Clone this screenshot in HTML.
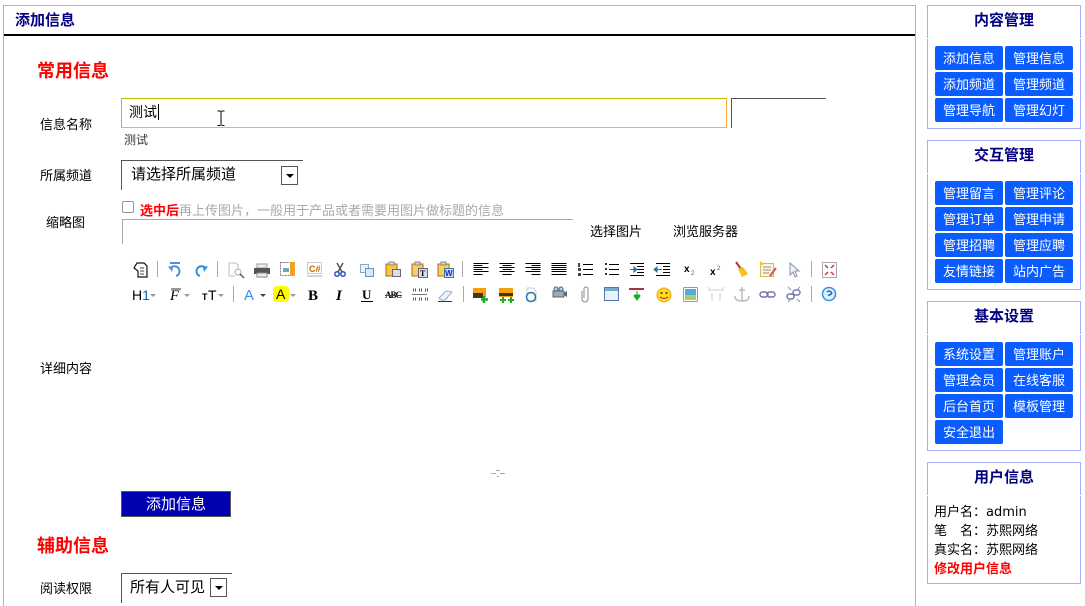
<!DOCTYPE html>
<html lang="zh"><head><meta charset="utf-8"><title>添加信息</title>
<style>
html,body{margin:0;padding:0;background:#fff;overflow:hidden;width:1085px;height:606px}
body{position:relative;font:13px/18px "Liberation Sans","WenQuanYi Zen Hei","Noto Sans CJK SC",sans-serif;color:#000}
.a{position:absolute;white-space:nowrap}
.box{position:absolute;box-sizing:border-box;border:1px solid #aaaaff;left:927px;width:154px;background:#fff}
.notch{position:absolute;width:1px;height:1px;background:#fff}
.h{position:absolute;left:927px;width:154px;text-align:center;font-size:15px;font-weight:bold;color:#000080;line-height:18px}
.b{position:absolute;width:68px;height:24px;line-height:26px;background:#0b5cff;color:#fff;text-align:center;border-radius:2px;font-size:13px}
.l{position:absolute;left:40px;line-height:18px}
.red{position:absolute;left:37px;font-size:18px;font-weight:bold;color:#f00;line-height:22px}
.ar{position:absolute;box-sizing:border-box;border:1px solid #555;width:17px;height:19px;background:#fff}
.ar:after{content:"";position:absolute;left:4px;top:7px;border:4px solid transparent;border-top:4px solid #000;border-bottom:0}
</style></head><body>
<div class="a" style="left:3px;top:5px;width:913px;height:601px;box-sizing:border-box;border:1px solid #aaaaff;border-bottom:0"></div>
<div class="a" style="left:15px;top:12px;font-size:15px;font-weight:bold;color:#000080">添加信息</div>
<div class="a" style="left:4px;top:34px;width:911px;height:2px;background:#000"></div>

<div class="red" style="top:60px">常用信息</div>
<div class="l" style="top:116px">信息名称</div>
<div class="a" style="left:121px;top:98px;width:606px;height:30px;box-sizing:border-box;border:1px solid;border-color:#c4bc00 #ffaa44 #ffaa66 #c4bc00"></div>
<div class="a" style="left:129px;top:103px;font-size:14px">测试</div>
<div class="a" style="left:158px;top:104px;width:1px;height:16px;background:#000"></div>
<svg class="a" style="left:216px;top:110px" width="10" height="17"><path d="M1.5 1H4.5M5.5 1H8.5M5 1V15M1.5 15.500H4.500M5.500 15.500H8.500" stroke="#000" fill="none"/></svg>
<div class="a" style="left:731px;top:98px;width:95px;height:30px;box-sizing:border-box;border-top:1px solid #555;border-left:1px solid #555"></div>
<div class="a" style="left:124px;top:132px;font-size:12px;line-height:16px;color:#333">测试</div>

<div class="l" style="top:167px">所属频道</div>
<div class="a" style="left:121px;top:160px;width:182px;height:30px;box-sizing:border-box;border-top:1px solid #555;border-left:1px solid #555"></div>
<div class="a" style="left:131px;top:166px;font-size:15px">请选择所属频道</div>
<div class="ar" style="left:281px;top:166px"></div>

<div class="a" style="left:122px;top:201px;width:12px;height:12px;box-sizing:border-box;border:1px solid #999;border-radius:2px"></div>
<div class="a" style="left:140px;top:202px"><b style="color:#f00">选中后</b><span style="color:#aaa">再上传图片，一般用于产品或者需要用图片做标题的信息</span></div>
<div class="a" style="left:46px;top:214px">缩略图</div>
<div class="a" style="left:122px;top:219px;width:451px;height:25px;box-sizing:border-box;border-top:1px solid #aaa;border-left:1px solid #aaa"></div>
<div class="a" style="left:590px;top:223px">选择图片</div>
<div class="a" style="left:673px;top:223px">浏览服务器</div>

<svg class="a" style="left:0;top:0" width="1085" height="606" font-family="Liberation Sans">
<g fill="#aaa"><rect x="157" y="261" width="1" height="16"/><rect x="217" y="261" width="1" height="16"/><rect x="462" y="261" width="1" height="16"/><rect x="811" y="261" width="1" height="16"/><rect x="233" y="286" width="1" height="16"/><rect x="463" y="286" width="1" height="16"/><rect x="811" y="286" width="1" height="16"/></g>
<!-- row 1 -->
<path d="M137 263h7l3 3v11h-9v-6l-4-3z" fill="#fff" stroke="#111" stroke-width="1.200"/><path d="M140 268h4M140 271h4M140 274h4" stroke="#444"/>
<path d="M170 263h10M170 269a5 5 0 1 1 6 7" fill="none" stroke="#4a8fe0" stroke-width="2"/><path d="M168 266l5 1-1 5z" fill="#4a8fe0"/>
<path d="M206 269a5 5 0 1 0-6 7" fill="none" stroke="#2a8fe0" stroke-width="2"/><path d="M208 266l-5 1 1 5z" fill="#2a8fe0"/>
<path d="M229 263h7l2 2v7M229 263v13h6" fill="none" stroke="#bbb"/><circle cx="238" cy="272" r="3" fill="#fff" stroke="#aaa"/><path d="M240 274l4 4" stroke="#555" stroke-width="1.500"/>
<path d="M257 264h10v4h-10z" fill="#eee" stroke="#999"/><rect x="254" y="268" width="16" height="6" fill="#555"/><rect x="257" y="273" width="10" height="4" fill="#eee" stroke="#888"/>
<rect x="280.500" y="262.500" width="13" height="13" fill="#fff" stroke="#777" stroke-dasharray="2 1"/><rect x="290" y="262" width="5" height="14" fill="#f5a020"/><rect x="283" y="268" width="6" height="4" fill="#6ab"/>
<rect x="307.500" y="262.500" width="14" height="11" fill="#fff" stroke="#ccc"/><path d="M307 276h15" stroke="#aaa"/><text x="309" y="272" font-size="9" font-weight="bold" fill="#c60">C#</text>
<path d="M337 263l5 9M343 263l-5 9" stroke="#555" stroke-width="1.500"/><circle cx="337" cy="274" r="2.200" fill="none" stroke="#2a50c0" stroke-width="1.500"/><circle cx="343" cy="274" r="2.200" fill="none" stroke="#2a50c0" stroke-width="1.500"/>
<rect x="360.500" y="264.500" width="8" height="8" fill="#e8f2ff" stroke="#8ab"/><rect x="365.500" y="268.500" width="8" height="8" fill="#d5e8ff" stroke="#59c"/>
<rect x="386" y="264" width="11" height="12" fill="#f8c840" stroke="#a87010"/><rect x="389" y="262" width="5" height="3" fill="#ddd" stroke="#888"/><rect x="392.500" y="269.500" width="8" height="7" fill="#dde" stroke="#667"/>
<rect x="412" y="264" width="11" height="12" fill="#f8d060" stroke="#a87010"/><rect x="415" y="262" width="5" height="3" fill="#eca" stroke="#888"/><rect x="418.500" y="268.500" width="9" height="9" fill="#dde" stroke="#667"/><text x="420" y="276" font-size="8" font-weight="bold" font-family="Liberation Serif">T</text>
<rect x="438" y="264" width="11" height="12" fill="#f8d060" stroke="#a87010"/><rect x="441" y="262" width="5" height="3" fill="#eca" stroke="#888"/><rect x="444.500" y="268.500" width="9" height="9" fill="#cde" stroke="#47a"/><text x="445" y="276" font-size="8" font-weight="bold" fill="#03b">W</text>
<g stroke="#000" fill="none">
<path d="M473.500 263.500h15M473.500 265.500h9M473.500 267.500h15M473.500 269.500h9M473.500 271.500h15M473.500 274.500h9"/>
<path d="M499.500 263.500h15M502.500 265.500h9M499.500 267.500h15M502.500 269.500h9M499.500 271.500h15M502.500 274.500h9"/>
<path d="M525.500 263.500h15M531.500 265.500h9M525.500 267.500h15M531.500 269.500h9M525.500 271.500h15M531.500 274.500h9"/>
<path d="M551.500 263.500h15M551.500 265.500h15M551.500 267.500h15M551.500 269.500h15M551.500 271.500h15M551.500 274.500h15"/>
<path d="M583 264.500h10M583 269.500h10M583 274.500h10"/><path d="M609 264.500h10M609 269.500h10M609 274.500h10"/>
<path d="M630 263.500h14M637 266.500h7M637 269.500h7M637 272.500h7M630 275.500h14"/><path d="M656 263.500h14M663 266.500h7M663 269.500h7M663 272.500h7M656 275.500h14"/>
</g>
<path d="M578 263h2v4h-2zM578 268h3v3h-3zM578 273h3v3h-3z" fill="#444"/><path d="M605 263h2v2h-2zM605 268h2v2h-2zM605 273h2v2h-2z" fill="#333"/>
<path d="M630 269.500h5M634 267v5l3-2.500z" fill="#27a" stroke="#27a"/><path d="M662 269.500h-6M657 267v5l-3-2.500z" fill="#27a" stroke="#27a"/>
<text x="684" y="272" font-size="10" font-weight="bold">x</text><text x="691" y="275" font-size="6" fill="#268">2</text>
<text x="710" y="275" font-size="10" font-weight="bold">x</text><text x="717" y="270" font-size="6" fill="#268">2</text>
<path d="M736 262l5 7" stroke="#b33" stroke-width="2"/><path d="M738 269l5-2 5 7-6 3z" fill="#f2c020"/>
<rect x="760.500" y="263.500" width="13" height="13" fill="#fff8d0" stroke="#cb6"/><path d="M763 267h8M763 270h8M763 273h6" stroke="#88a"/><path d="M770 276l6-8" stroke="#c55" stroke-width="2"/><path d="M760 262l3 3" stroke="#fc0" stroke-width="2"/>
<path d="M790 263v12l3-3 2 5 2-1-2-5h4z" fill="#eef" stroke="#89a"/>
<rect x="822.500" y="262.500" width="14" height="15" fill="#fff" stroke="#aaa"/><path d="M825 265l3 3M834 265l-3 3M825 275l3-3M834 275l-3-3" stroke="#d33" stroke-width="1.500"/>
<!-- row 2 -->
<text x="132" y="300" font-size="14">H<tspan fill="#1060c0">1</tspan></text>
<path d="M150 294h6l-3 3zM184 294h6l-3 3zM218 294h6l-3 3zM290 294h6l-3 3z" fill="#999"/><path d="M260 294h6l-3 3z" fill="#444"/>
<text x="170" y="300" font-size="15" font-style="italic" font-family="Liberation Serif">F</text><path d="M171 289h10" stroke="#333"/>
<text x="202" y="300" font-size="9" font-weight="bold">T</text><text x="208" y="300" font-size="14">T</text>
<text x="244" y="300" font-size="15" fill="#3c8ce8">A</text>
<rect x="273" y="286" width="16" height="16" rx="4" fill="#ffff00"/><text x="276" y="299" font-size="14">A</text>
<text x="308" y="300" font-size="15" font-weight="bold" font-family="Liberation Serif">B</text>
<text x="336" y="300" font-size="15" font-weight="bold" font-style="italic" font-family="Liberation Serif">I</text>
<text x="362" y="299" font-size="13" font-weight="bold" font-family="Liberation Serif">U</text><path d="M361 301.500h12" stroke="#000"/>
<text x="385" y="298" font-size="9" font-weight="bold" font-family="Liberation Serif" textLength="17">ABC</text><path d="M385 295.500h17" stroke="#063"/>
<path d="M412 294.500h15" stroke="#777"/><path d="M413 290h3M419 290h3M425 290h3M413 299h3M419 299h3M425 299h3" stroke="#274" stroke-dasharray="1 1" stroke-width="3"/>
<path d="M439 298l7-7 6 1-7 8h-4z" fill="#eef4ff" stroke="#9ac"/><path d="M438 301.500h14" stroke="#333"/>
<rect x="473" y="288" width="13" height="9" fill="#f5a010"/><rect x="473" y="293" width="10" height="5" fill="#432"/><path d="M484 296v7M481 299.500h7" stroke="#2a2" stroke-width="2.500"/>
<rect x="499" y="288" width="14" height="9" fill="#f5a010"/><rect x="499" y="293" width="14" height="3" fill="#432"/><path d="M503 297v6M500 300h6M511 297v6M508 300h6" stroke="#2a2" stroke-width="2"/>
<path d="M527 288h6l3 3v10h-9z" fill="#fff" stroke="#ccc"/><circle cx="531" cy="297" r="4.500" fill="#fff" stroke="#27a" stroke-width="1.500"/>
<rect x="553" y="291" width="11" height="6" fill="#9ab" stroke="#567"/><circle cx="556" cy="289" r="2" fill="#bcd" stroke="#567"/><circle cx="561" cy="289" r="2" fill="#bcd" stroke="#567"/><path d="M564 293l3-2v6l-3-2z" fill="#567"/>
<path d="M582 291v8a3 3 0 0 0 6 0v-10a2 2 0 0 0-4 0v9" fill="none" stroke="#888"/>
<rect x="604.500" y="287.500" width="14" height="13" fill="#e8f2ff" stroke="#57a"/><rect x="605" y="288" width="13" height="3" fill="#7ac"/>
<path d="M629 289h15" stroke="#a33" stroke-width="2"/><path d="M637 291v5M634 295h6M637 296l-3 0 3 4 3-4z" fill="#2a2" stroke="#2a2"/>
<circle cx="664" cy="295" r="7" fill="#ffd820" stroke="#e8a820"/><circle cx="661.500" cy="293" r="1" fill="#333"/><circle cx="666.500" cy="293" r="1" fill="#333"/><path d="M660 297q4 3 8 0" fill="none" stroke="#a33"/>
<rect x="683.500" y="287.500" width="14" height="14" rx="1" fill="#fff" stroke="#999"/><rect x="685" y="289" width="11" height="6" fill="#5ad"/><rect x="685" y="295" width="11" height="5" fill="#ac6"/>
<path d="M709 287v3h14v-3M712 293v8M720 293v8" fill="none" stroke="#ccc"/>
<path d="M742 287v14M735 296q0 5 7 5t7-5M739 290h6" fill="none" stroke="#bbb" stroke-width="1.500"/>
<g fill="none" stroke="#77a" stroke-width="1.500"><rect x="760" y="292" width="8" height="5" rx="2.500"/><rect x="767" y="292" width="8" height="5" rx="2.500"/><rect x="787" y="294" width="7" height="5" rx="2.500"/><rect x="793" y="290" width="7" height="5" rx="2.500"/></g>
<path d="M788 287l3 3M800 287l-3 3M788 302l3-3M800 302l-3-3" stroke="#89b"/>
<circle cx="829" cy="294" r="6.500" fill="#dcefff" stroke="#3a8ee0" stroke-width="1.500"/><path d="M827 292q2-2 4 0t-2 3v1" fill="none" stroke="#1560b0" stroke-width="1.500"/>
<!-- splitter -->
<path d="M491 473.500h5M500 473.500h5M496 470.500h4M497 476.500h2" stroke="#aaa"/>
</svg>
<div class="l" style="top:360px">详细内容</div>

<div class="a" style="left:121px;top:491px;width:110px;height:26px;box-sizing:border-box;border:1px solid #555;background:#0000b0;color:#fff;text-align:center;font-size:15px;line-height:26px">添加信息</div>
<div class="red" style="top:535px">辅助信息</div>
<div class="l" style="top:580px">阅读权限</div>
<div class="a" style="left:121px;top:573px;width:111px;height:30px;box-sizing:border-box;border-top:1px solid #555;border-left:1px solid #555"></div>
<div class="a" style="left:130px;top:579px;font-size:15px">所有人可见</div>
<div class="ar" style="left:210px;top:578px"></div>

<div class="box" style="top:5px;height:124px"></div><div class="notch" style="left:927px;top:38px"></div><div class="notch" style="left:1080px;top:38px"></div>
<div class="h" style="top:12px">内容管理</div>
<div class="b" style="left:935px;top:46px">添加信息</div><div class="b" style="left:1005px;top:46px">管理信息</div>
<div class="b" style="left:935px;top:72px">添加频道</div><div class="b" style="left:1005px;top:72px">管理频道</div>
<div class="b" style="left:935px;top:98px">管理导航</div><div class="b" style="left:1005px;top:98px">管理幻灯</div>

<div class="box" style="top:140px;height:150px"></div><div class="notch" style="left:927px;top:173px"></div><div class="notch" style="left:1080px;top:173px"></div>
<div class="h" style="top:147px">交互管理</div>
<div class="b" style="left:935px;top:181px">管理留言</div><div class="b" style="left:1005px;top:181px">管理评论</div>
<div class="b" style="left:935px;top:207px">管理订单</div><div class="b" style="left:1005px;top:207px">管理申请</div>
<div class="b" style="left:935px;top:233px">管理招聘</div><div class="b" style="left:1005px;top:233px">管理应聘</div>
<div class="b" style="left:935px;top:259px">友情链接</div><div class="b" style="left:1005px;top:259px">站内广告</div>

<div class="box" style="top:301px;height:150px"></div><div class="notch" style="left:927px;top:334px"></div><div class="notch" style="left:1080px;top:334px"></div>
<div class="h" style="top:308px">基本设置</div>
<div class="b" style="left:935px;top:342px">系统设置</div><div class="b" style="left:1005px;top:342px">管理账户</div>
<div class="b" style="left:935px;top:368px">管理会员</div><div class="b" style="left:1005px;top:368px">在线客服</div>
<div class="b" style="left:935px;top:394px">后台首页</div><div class="b" style="left:1005px;top:394px">模板管理</div>
<div class="b" style="left:935px;top:420px">安全退出</div>

<div class="box" style="top:462px;height:122px"></div><div class="notch" style="left:927px;top:495px"></div><div class="notch" style="left:1080px;top:495px"></div>
<div class="h" style="top:469px">用户信息</div>
<div class="a" style="left:934px;top:503px">用户名：<span style="font-family:'DejaVu Sans',sans-serif;font-size:13px">admin</span></div>
<div class="a" style="left:934px;top:522px">笔<span style="display:inline-block;width:13px"></span>名：苏熙网络</div>
<div class="a" style="left:934px;top:541px">真实名：苏熙网络</div>
<div class="a" style="left:934px;top:560px;color:#f00;font-weight:bold">修改用户信息</div>
</body></html>
